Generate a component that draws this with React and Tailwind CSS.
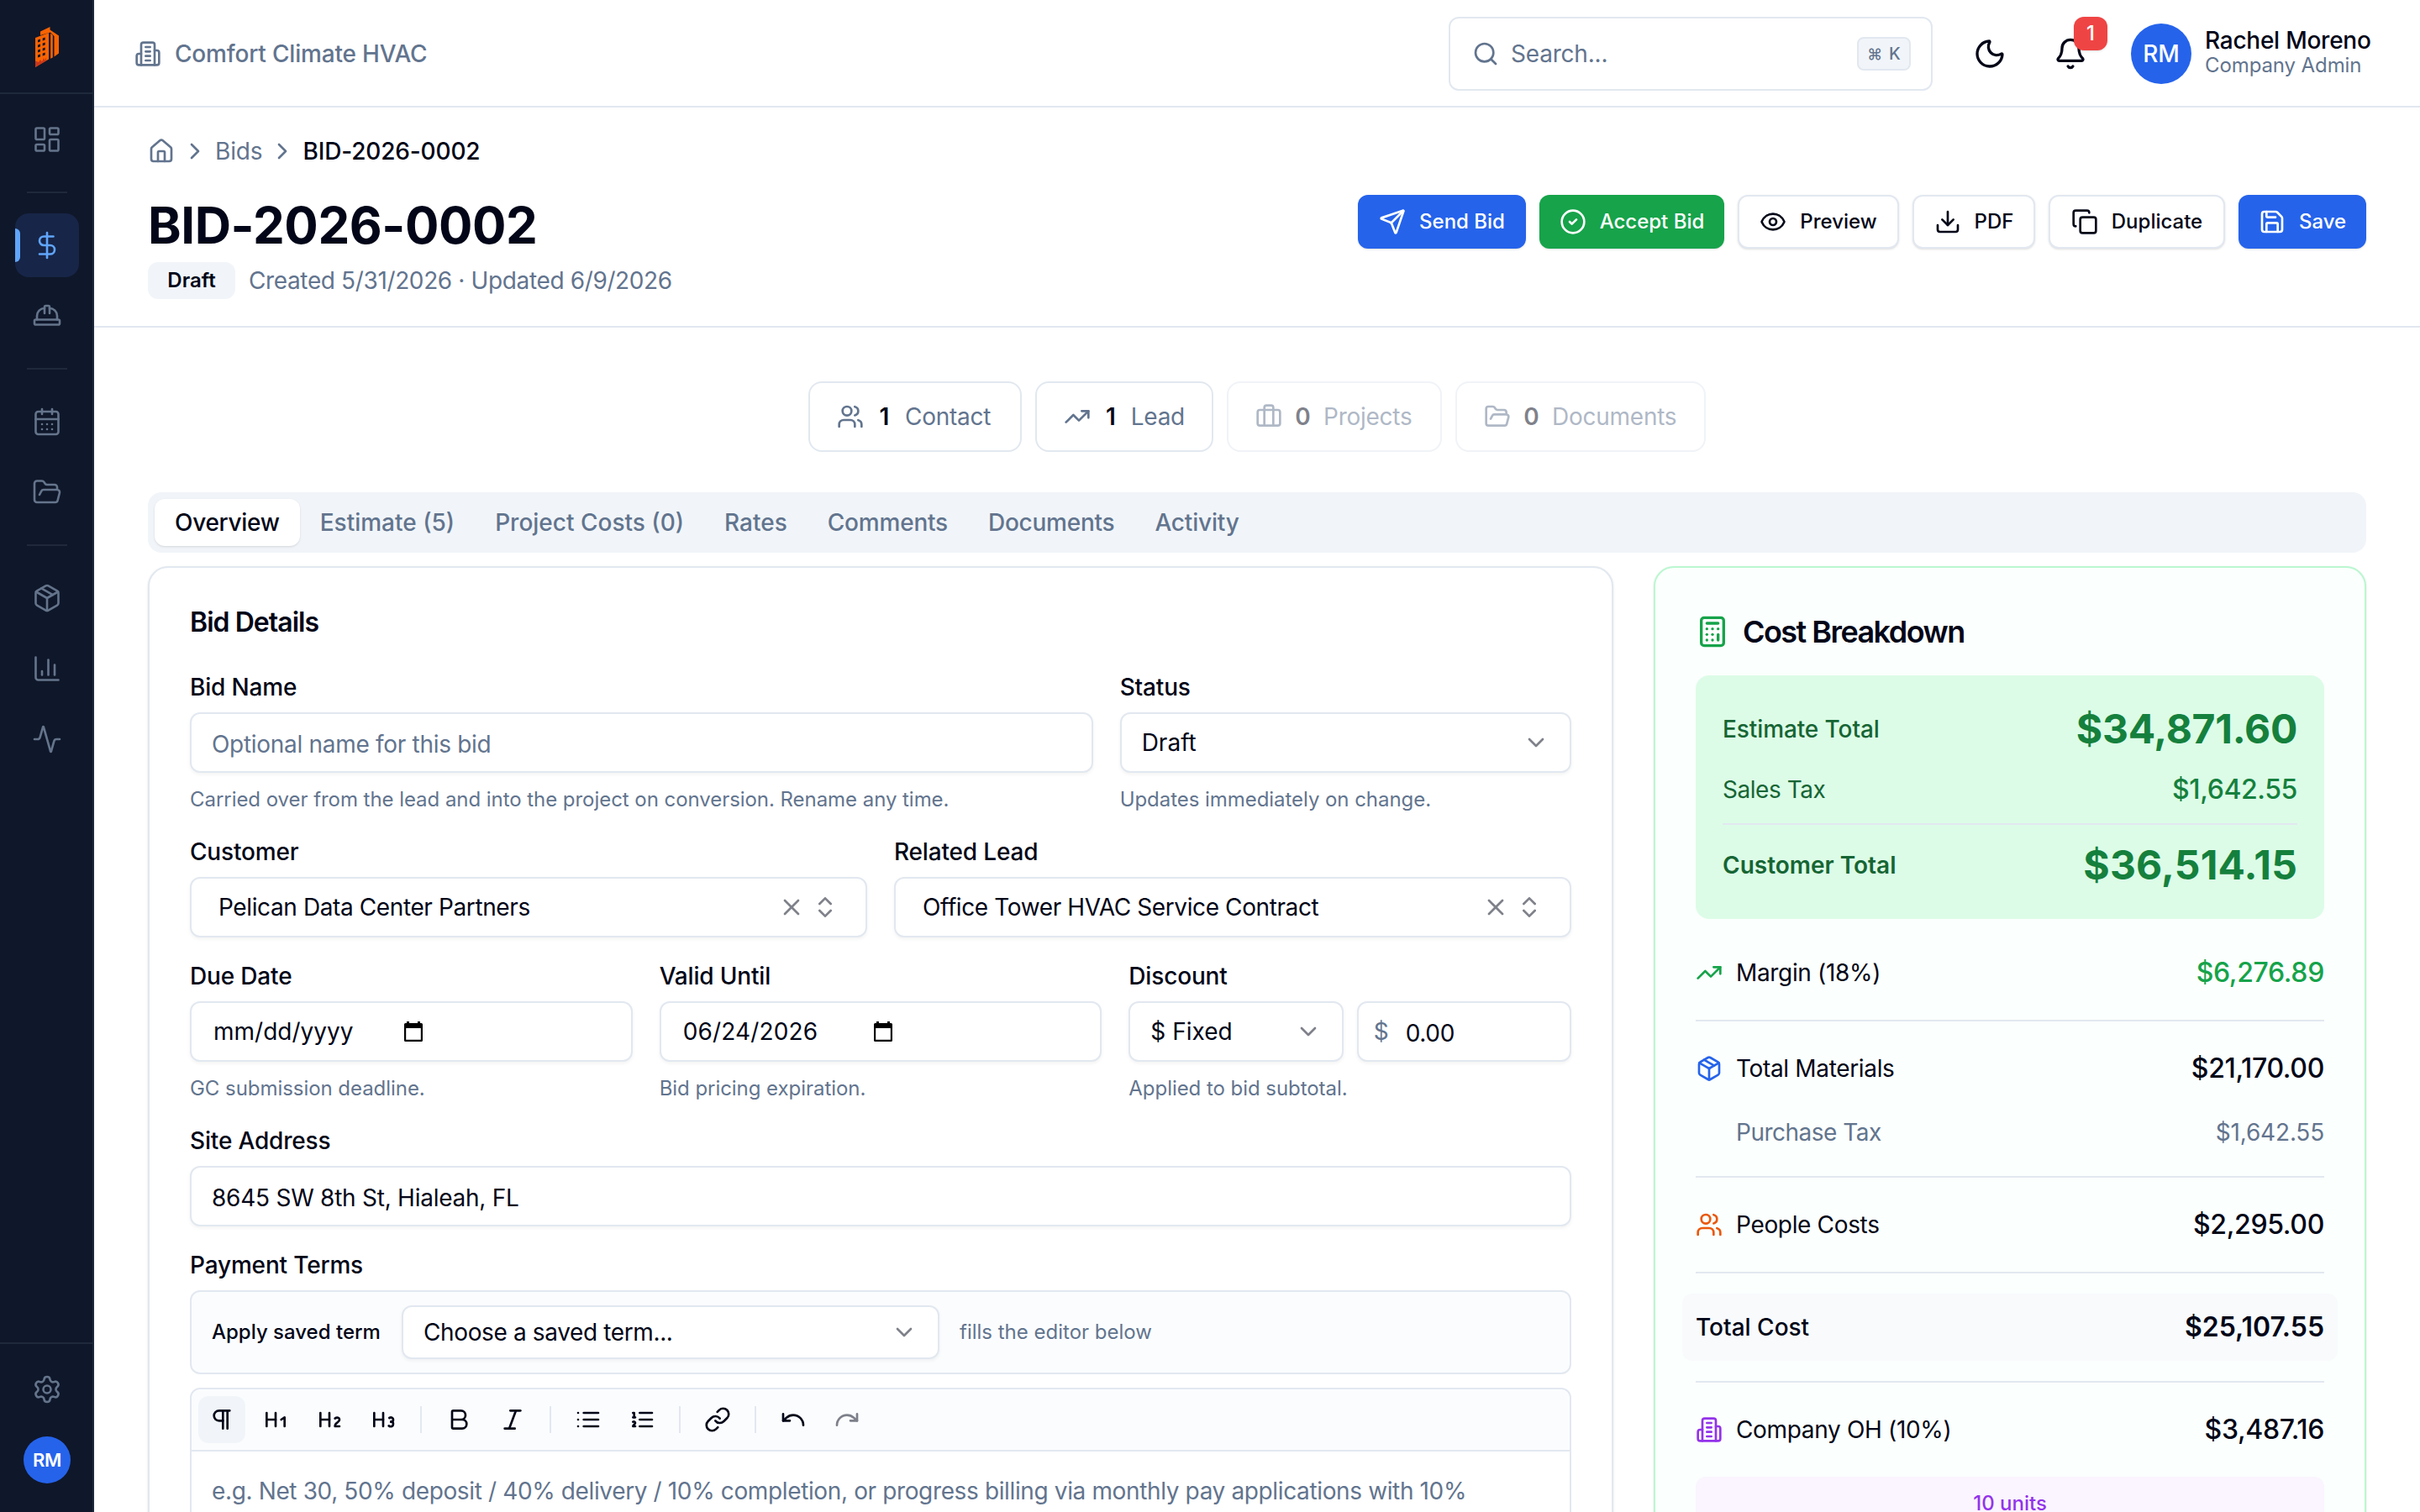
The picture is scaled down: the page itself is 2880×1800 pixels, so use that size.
import React, { useState } from 'react';
import {
  Activity, Bell, Bold, Briefcase, Calculator, CalendarDays, ChartColumn, ChevronDown, ChevronRight,
  ChevronsUpDown, CircleCheck, Copy, DollarSign, Download, Eye, FolderOpen, HardHat, Heading1, Heading2,
  Heading3, House, Italic, LayoutDashboard, Link, Moon, Package, Pilcrow, Redo, Save, Search, Send,
  Settings, TrendingUp, Undo, Users, X
} from 'lucide-react';
import clsx from 'clsx';

function Svg({ className, children }) {
  return (
    <svg viewBox="0 0 24 24" fill="none" stroke="currentColor" strokeWidth="2" strokeLinecap="round" strokeLinejoin="round" className={className}>
      {children}
    </svg>
  );
}

const BuildingIcon = ({ className }) => (
  <Svg className={className}>
    <path d="M6 22V4a2 2 0 0 1 2-2h8a2 2 0 0 1 2 2v18Z" />
    <path d="M6 12H4a2 2 0 0 0-2 2v6a2 2 0 0 0 2 2h2" />
    <path d="M18 9h2a2 2 0 0 1 2 2v9a2 2 0 0 1-2 2h-2" />
    <path d="M10 6h4M10 10h4M10 14h4M10 18h4" />
  </Svg>
);

const BulletListIcon = ({ className }) => (
  <Svg className={className}>
    <path d="M3 6h.01M3 12h.01M3 18h.01M8 6h13M8 12h13M8 18h13" />
  </Svg>
);

const NumberListIcon = ({ className }) => (
  <Svg className={className}>
    <path d="M10 6h11M10 12h11M10 18h11M4 6h1v4M4 10h2M6 18H4c0-1 2-2 2-3s-1-1.5-2-1" />
  </Svg>
);

const DateIcon = () => (
  <svg viewBox="0 0 24 24" className="w-6 h-6" fill="black">
    <path fillRule="evenodd" d="M4 0h3v2h10V0h3v2h1.500a1.500 1.500 0 0 1 1.500 1.500v19a1.500 1.500 0 0 1-1.500 1.500h-19A1.500 1.500 0 0 1 1 22.500v-19A1.500 1.500 0 0 1 2.500 2H4zM3.200 8v13.800h17.600V8z" />
  </svg>
);

const Logo = () => (
  <svg viewBox="0 0 28 48" className="w-7 h-12">
    <path fill="#f96302" d="M6 5.500 17.500 0v3.500L28 10.500v21l-5.500 4V11L18 6.500 6 10z" />
    <path fill="#f96302" d="M18.200 7.500 20.800 10v26.500l-2.600 1.300z" />
    <path fill="#f96302" d="M0 13 16 7v31.500L0 48z" />
    <path fill="#c8371b" d="M0 40.500 4 42l2-3 2 2.500 2-4.500 1.500 3L13 36v4.300L0 48z" />
    <path fill="#0f172a" d="M3 15.500l3-1v3l-3 1zM8.700 13.500l3-1v3l-3 1zM3 21.500l3-1v3l-3 1zM8.700 19.500l3-1v3l-3 1zM3 27.500l3-1v3l-3 1zM8.700 25.500l3-1v3l-3 1zM3 33.500l3-1v3l-3 1zM8.700 31.500l3-1v3l-3 1z" />
  </svg>
);

const navGroups = [
  [LayoutDashboard],
  [DollarSign, HardHat],
  [CalendarDays, FolderOpen],
  [Package, ChartColumn, Activity]
];

function Sidebar() {
  return (
    <aside className="w-28 h-full shrink-0 bg-[#0f172a] border-r-2 border-[#1e293b] flex flex-col text-[#64748b]">
      <div className="h-28 border-b-2 border-[#1e293b] flex items-center justify-center pl-0.5 pt-0.5">
        <Logo />
      </div>
      <nav className="flex-1 pt-4 pl-0.5 flex flex-col items-center">
        {navGroups.map((group, gi) => (
          <React.Fragment key={gi}>
            {gi > 0 && <div className="w-12 h-0.5 my-6 bg-[#1e293b]" />}
            <div className="flex flex-col gap-2">
              {group.map((Icon, i) => {
                const active = Icon === DollarSign;
                return (
                  <a key={i} className={clsx('relative w-[76px] h-[76px] rounded-2xl flex items-center justify-center', active && 'bg-[#172548] text-[#60a5fa]')}>
                    {active && <span className="absolute left-0 top-[18px] w-1.5 h-10 rounded-r-md bg-[#60a5fa]" />}
                    <Icon className="w-9 h-9" strokeWidth={1.75} />
                  </a>
                );
              })}
            </div>
          </React.Fragment>
        ))}
      </nav>
      <div className="h-[202px] border-t-2 border-[#1e293b] flex flex-col items-center pt-4 pl-0.5 gap-2">
        <a className="w-[76px] h-[76px] flex items-center justify-center">
          <Settings className="w-9 h-9" strokeWidth={1.75} />
        </a>
        <div className="w-[76px] h-[76px] flex items-center justify-center">
          <div className="w-14 h-14 rounded-full bg-[#2563eb] text-white text-[22px] tracking-[-0.3px] font-semibold flex items-center justify-center">RM</div>
        </div>
      </div>
    </aside>
  );
}

function Topbar() {
  return (
    <header className="h-32 shrink-0 border-b-2 border-slate-200 flex items-center pt-0.5 pl-12 pr-[58px]">
      <div className="flex items-center gap-4 text-slate-500">
        <BuildingIcon className="w-8 h-8" />
        <span className="text-[28px] leading-10 font-medium tracking-[-0.18px]">Comfort Climate HVAC</span>
      </div>
      <div className="ml-auto w-[576px] h-[88px] rounded-xl border-2 border-slate-200 flex items-center pl-[26px] pr-6 text-slate-500">
        <Search className="w-8 h-8" />
        <span className="ml-3.5 text-[28px] tracking-[-0.2px]">Search...</span>
        <kbd className="ml-auto w-16 h-10 rounded-lg border-2 border-slate-200 bg-slate-100 font-medium text-[20px] flex items-center justify-center gap-2" style={{ fontFamily: 'Inter, "DejaVu Sans", sans-serif' }}>
          <span className="text-[18px]">⌘</span>K
        </kbd>
      </div>
      <div className="ml-7 w-20 h-20 flex items-center justify-center">
        <Moon className="w-10 h-10" />
      </div>
      <div className="relative ml-4 w-20 h-20 flex items-center justify-center">
        <Bell className="w-10 h-10" />
        <span className="absolute -top-1 right-[-4px] w-10 h-10 rounded-xl bg-[#ef4444] text-white text-[24px] font-medium shadow flex items-center justify-center">1</span>
      </div>
      <div className="ml-8 w-[72px] h-[72px] rounded-full bg-[#2563eb] text-white text-[28px] font-medium flex items-center justify-center">RM</div>
      <div className="ml-4 w-[198px] whitespace-nowrap">
        <div className="text-[28px] leading-[28px] font-medium tracking-[-0.25px]">Rachel Moreno</div>
        <div className="text-[24px] leading-8 text-slate-500 tracking-[-0.1px]">Company Admin</div>
      </div>
    </header>
  );
}

const actions = [
  { label: 'Send Bid', icon: Send, tone: 'bg-[#2563eb] text-white', width: 'w-[200px]' },
  { label: 'Accept Bid', icon: CircleCheck, tone: 'bg-[#16a34a] text-white', width: 'w-[220px]' },
  { label: 'Preview', icon: Eye, tone: 'border-2 border-slate-200 bg-white', width: 'w-[192px]' },
  { label: 'PDF', icon: Download, tone: 'border-2 border-slate-200 bg-white', width: 'w-[146px]' },
  { label: 'Duplicate', icon: Copy, tone: 'border-2 border-slate-200 bg-white', width: 'w-[210px]' },
  { label: 'Save', icon: Save, tone: 'bg-[#2563eb] text-white', width: 'w-[152px]' }
];

function PageHeader() {
  return (
    <div className="h-[262px] shrink-0 border-b-2 border-slate-200 px-16">
      <div className="h-[104px] flex items-center text-[28px] text-slate-500 tracking-[-0.15px]">
        <House className="w-8 h-8" />
        <ChevronRight className="w-8 h-8 mx-2" />
        <span>Bids</span>
        <ChevronRight className="w-8 h-8 mx-2" />
        <span className="font-medium text-slate-950">BID-2026-0002</span>
      </div>
      <div className="flex justify-between items-start">
        <div>
          <h1 className="text-[60px] leading-[72px] font-bold tracking-[-0.42px]">BID-2026-0002</h1>
          <div className="mt-2 flex items-center gap-4">
            <span className="h-11 w-[104px] rounded-xl bg-slate-100 text-[24px] font-semibold flex items-center justify-center">Draft</span>
            <span className="text-[28px] text-slate-500 tracking-[-0.37px]">Created 5/31/2026 · Updated 6/9/2026</span>
          </div>
        </div>
        <div className="flex gap-4">
          {actions.map(({ label, icon: Icon, tone, width }) => (
            <button key={label} className={clsx('h-16 rounded-xl shadow flex items-center justify-center gap-4 text-[24px] font-medium', tone, width)}>
              <Icon className="w-8 h-8 shrink-0" />
              {label}
            </button>
          ))}
        </div>
      </div>
    </div>
  );
}

const links = [
  { count: 1, label: 'Contact', icon: Users, width: 'w-[254px]' },
  { count: 1, label: 'Lead', icon: TrendingUp, width: 'w-[212px]' },
  { count: 0, label: 'Projects', icon: Briefcase, width: 'w-[256px]' },
  { count: 0, label: 'Documents', icon: FolderOpen, width: 'w-[298px]' }
];

const tabs = [
  { name: 'Overview', tracking: 'tracking-[-0.3px]' },
  { name: 'Estimate (5)', tracking: 'tracking-[0px]' },
  { name: 'Project Costs (0)', tracking: 'tracking-[0px]' },
  { name: 'Rates', tracking: 'tracking-[0px]' },
  { name: 'Comments', tracking: 'tracking-[-0.2px]' },
  { name: 'Documents', tracking: 'tracking-[-0.25px]' },
  { name: 'Activity', tracking: 'tracking-[-0.2px]' }
];

function Field({ label, hint, children }) {
  return (
    <div className="flex flex-col">
      <label className="text-[28px] leading-[28px] font-medium tracking-[-0.17px] mb-4">{label}</label>
      {children}
      {hint && <p className="mt-4 text-[24px] leading-8 text-slate-500 tracking-[-0.05px]">{hint}</p>}
    </div>
  );
}

function Box({ className, children }) {
  return (
    <div className={clsx('h-[72px] rounded-xl border-2 border-slate-200 bg-white shadow-[0_2px_4px_rgba(0,0,0,0.05)] flex items-center text-[28px]', className)}>
      {children}
    </div>
  );
}

function SelectBox({ children }) {
  return (
    <Box className="px-6 justify-between">
      <span>{children}</span>
      <ChevronDown className="w-8 h-8 opacity-50" />
    </Box>
  );
}

function Combobox({ children }) {
  return (
    <Box className="px-8 tracking-[-0.39px]">
      <span className="flex-1">{children}</span>
      <X className="w-8 h-8 mr-2 opacity-50" />
      <ChevronsUpDown className="w-8 h-8 opacity-50" />
    </Box>
  );
}

const ToolButton = ({ icon: Icon, active, dim }) => (
  <button className={clsx('w-14 h-14 rounded-xl flex items-center justify-center', active && 'bg-slate-100', dim && 'opacity-50')}>
    <Icon className="w-8 h-8" />
  </button>
);

const ToolDivider = () => <span className="w-0.5 h-8 mx-2 bg-slate-200" />;

function BidDetails() {
  return (
    <section className="col-span-2 h-[1300px] rounded-3xl border-2 border-slate-200 bg-white shadow p-12">
      <h2 className="text-[32px] leading-[34px] font-semibold tracking-[-0.96px] mb-[46px]">Bid Details</h2>
      <div className="flex flex-col gap-8">
        <div className="grid grid-cols-[2fr_1fr] gap-8">
          <Field label="Bid Name" hint="Carried over from the lead and into the project on conversion. Rename any time.">
            <Box className="px-6 pt-1 text-slate-500 tracking-[-0.3px]">Optional name for this bid</Box>
          </Field>
          <Field label="Status" hint="Updates immediately on change.">
            <SelectBox>Draft</SelectBox>
          </Field>
        </div>
        <div className="grid grid-cols-2 gap-8">
          <Field label="Customer"><Combobox>Pelican Data Center Partners</Combobox></Field>
          <Field label="Related Lead"><Combobox>Office Tower HVAC Service Contract</Combobox></Field>
        </div>
        <div className="grid grid-cols-3 gap-8">
          <Field label="Due Date" hint="GC submission deadline.">
            <Box className="px-[26px]"><span className="w-[226px]">mm/dd/yyyy</span><DateIcon /></Box>
          </Field>
          <Field label="Valid Until" hint="Bid pricing expiration.">
            <Box className="px-[26px]"><span className="w-[226px] tracking-[0.15px]">06/24/2026</span><DateIcon /></Box>
          </Field>
          <Field label="Discount" hint="Applied to bid subtotal.">
            <div className="grid grid-cols-2 gap-4">
              <SelectBox>$ Fixed</SelectBox>
              <Box className="pl-[18px]">
                <span className="w-[38px] text-slate-500">$</span>
                <span className="pt-1 tracking-[-0.3px]">0.00</span>
              </Box>
            </div>
          </Field>
        </div>
        <Field label="Site Address">
          <Box className="px-6 pt-1 tracking-[-0.25px]">8645 SW 8th St, Hialeah, FL</Box>
        </Field>
        <Field label="Payment Terms">
          <div className="h-[100px] rounded-xl border-2 border-slate-200 bg-[#fbfcfe] flex items-center gap-6 px-6 text-[24px]">
            <span className="w-[202px] whitespace-nowrap font-medium">Apply saved term</span>
            <div className="w-[640px] h-16 rounded-xl border-2 border-slate-200 bg-white shadow-[0_2px_4px_rgba(0,0,0,0.05)] flex items-center justify-between px-6 text-[28px] tracking-[-0.37px]">
              Choose a saved term...
              <ChevronDown className="w-8 h-8 opacity-50" />
            </div>
            <span className="text-slate-500">fills the editor below</span>
          </div>
          <div className="mt-4 h-[300px] rounded-xl border-2 border-slate-200">
            <div className="h-[74px] rounded-t-xl border-b-2 border-slate-200 bg-[#fbfcfe] flex items-center gap-2 px-2">
              <ToolButton icon={Pilcrow} active />
              <ToolButton icon={Heading1} />
              <ToolButton icon={Heading2} />
              <ToolButton icon={Heading3} />
              <ToolDivider />
              <ToolButton icon={Bold} />
              <ToolButton icon={Italic} />
              <ToolDivider />
              <ToolButton icon={BulletListIcon} />
              <ToolButton icon={NumberListIcon} />
              <ToolDivider />
              <ToolButton icon={Link} />
              <ToolDivider />
              <ToolButton icon={Undo} />
              <ToolButton icon={Redo} dim />
            </div>
            <p className="px-6 pt-6 text-[28px] leading-[46px] text-slate-500 tracking-[-0.37px]">
              e.g. Net 30, 50% deposit / 40% delivery / 10% completion, or progress billing via monthly pay applications with 10%
            </p>
          </div>
        </Field>
      </div>
    </section>
  );
}

function CostRow({ icon: Icon, tone, label, value, valueTone }) {
  return (
    <div className="h-20 flex items-center text-[28px] tracking-[-0.34px]">
      <Icon className={clsx('w-8 h-8 mr-4', tone)} />
      <span>{label}</span>
      <span className={clsx('ml-auto text-[32px] font-medium', valueTone)}>{value}</span>
    </div>
  );
}

const Rule = () => <div className="h-0.5 my-4 bg-slate-200" />;

function CostBreakdown() {
  return (
    <aside className="h-[1300px] rounded-3xl border-2 border-[#bbf7d0] bg-[#fbfffd] shadow px-12 pt-[56px]">
      <div className="flex items-center gap-4 h-10 mb-8">
        <Calculator className="w-10 h-10 text-[#16a34a]" />
        <h2 className="text-[36px] font-semibold tracking-[-1.55px]">Cost Breakdown</h2>
      </div>
      <div className="rounded-2xl bg-[#dcfce7] p-8 mb-6 text-[28px] text-[#166534]">
        <div className="h-16 flex items-center justify-between">
          <span className="font-medium tracking-[-0.1px]">Estimate Total</span>
          <span className="text-[48px] font-bold text-[#15803d] tracking-[-0.28px]">$34,871.60</span>
        </div>
        <div className="h-12 mt-4 flex items-center justify-between">
          <span className="tracking-[-0.45px]">Sales Tax</span>
          <span className="text-[32px] font-medium text-[#15803d] tracking-[-0.4px]">$1,642.55</span>
        </div>
        <div className="mt-4 pt-4 h-[82px] border-t-2 border-slate-200 flex items-center justify-between">
          <span className="font-semibold">Customer Total</span>
          <span className="text-[48px] font-bold text-[#15803d] tracking-[0.15px]">$36,514.15</span>
        </div>
      </div>
      <CostRow icon={TrendingUp} tone="text-[#16a34a]" label="Margin (18%)" value="$6,276.89" valueTone="text-[#16a34a]" />
      <Rule />
      <CostRow icon={Package} tone="text-[#2563eb]" label="Total Materials" value="$21,170.00" />
      <div className="h-[72px] pl-12 flex items-center justify-between text-[28px] text-slate-500">
        <span className="tracking-[-0.5px]">Purchase Tax</span>
        <span className="tracking-[-0.2px]">$1,642.55</span>
      </div>
      <Rule />
      <CostRow icon={Users} tone="text-[#ea580c]" label="People Costs" value="$2,295.00" />
      <Rule />
      <div className="h-20 my-6 -mx-4 px-4 rounded-xl bg-[#f8fafc] flex items-center justify-between text-[28px] font-medium">
        <span>Total Cost</span>
        <span className="text-[32px] font-semibold">$25,107.55</span>
      </div>
      <Rule />
      <CostRow icon={BuildingIcon} tone="text-[#9333ea]" label="Company OH (10%)" value="$3,487.16" />
      <div className="mt-4 h-40 pt-5 rounded-xl bg-[#faf5ff] text-center text-[24px] leading-6 font-medium text-[#9333ea]">10 units</div>
    </aside>
  );
}

export default function App() {
  const [tab, setTab] = useState('Overview');

  return (
    <div className="w-[2880px] h-[1800px] overflow-hidden flex bg-white text-slate-950" style={{ fontFamily: 'Inter, "DejaVu Sans", sans-serif' }}>
      <Sidebar />
      <div className="flex-1 min-w-0 flex flex-col">
        <Topbar />
        <PageHeader />
        <main className="flex-1 min-h-0 overflow-hidden px-16 pt-16">
          {/* Linked records */}
          <div className="flex justify-center gap-4 text-[28px]">
            {links.map(({ count, label, icon: Icon, width }) => (
              <a key={label} className={clsx('h-[84px] px-8 rounded-2xl border-2 border-slate-200 flex items-center gap-4', width, count === 0 && 'opacity-50')}>
                <Icon className="w-8 h-8 shrink-0 text-slate-500" />
                <span className="w-[17px] flex justify-center font-semibold">{count}</span>
                <span className="text-slate-500 tracking-[-0.25px]">{label}</span>
              </a>
            ))}
          </div>
          <div className="mt-12 h-[72px] rounded-2xl bg-slate-100 p-2 flex">
            {tabs.map(({ name, tracking }) => (
              <button
                key={name}
                onClick={() => setTab(name)}
                className={clsx('h-14 px-6 rounded-xl text-[28px] font-medium', tracking, name === tab ? 'bg-white shadow' : 'text-slate-500')}
              >
                {name}
              </button>
            ))}
          </div>
          <div className="mt-4 grid grid-cols-3 gap-12">
            <BidDetails />
            <CostBreakdown />
          </div>
        </main>
      </div>
    </div>
  );
}
